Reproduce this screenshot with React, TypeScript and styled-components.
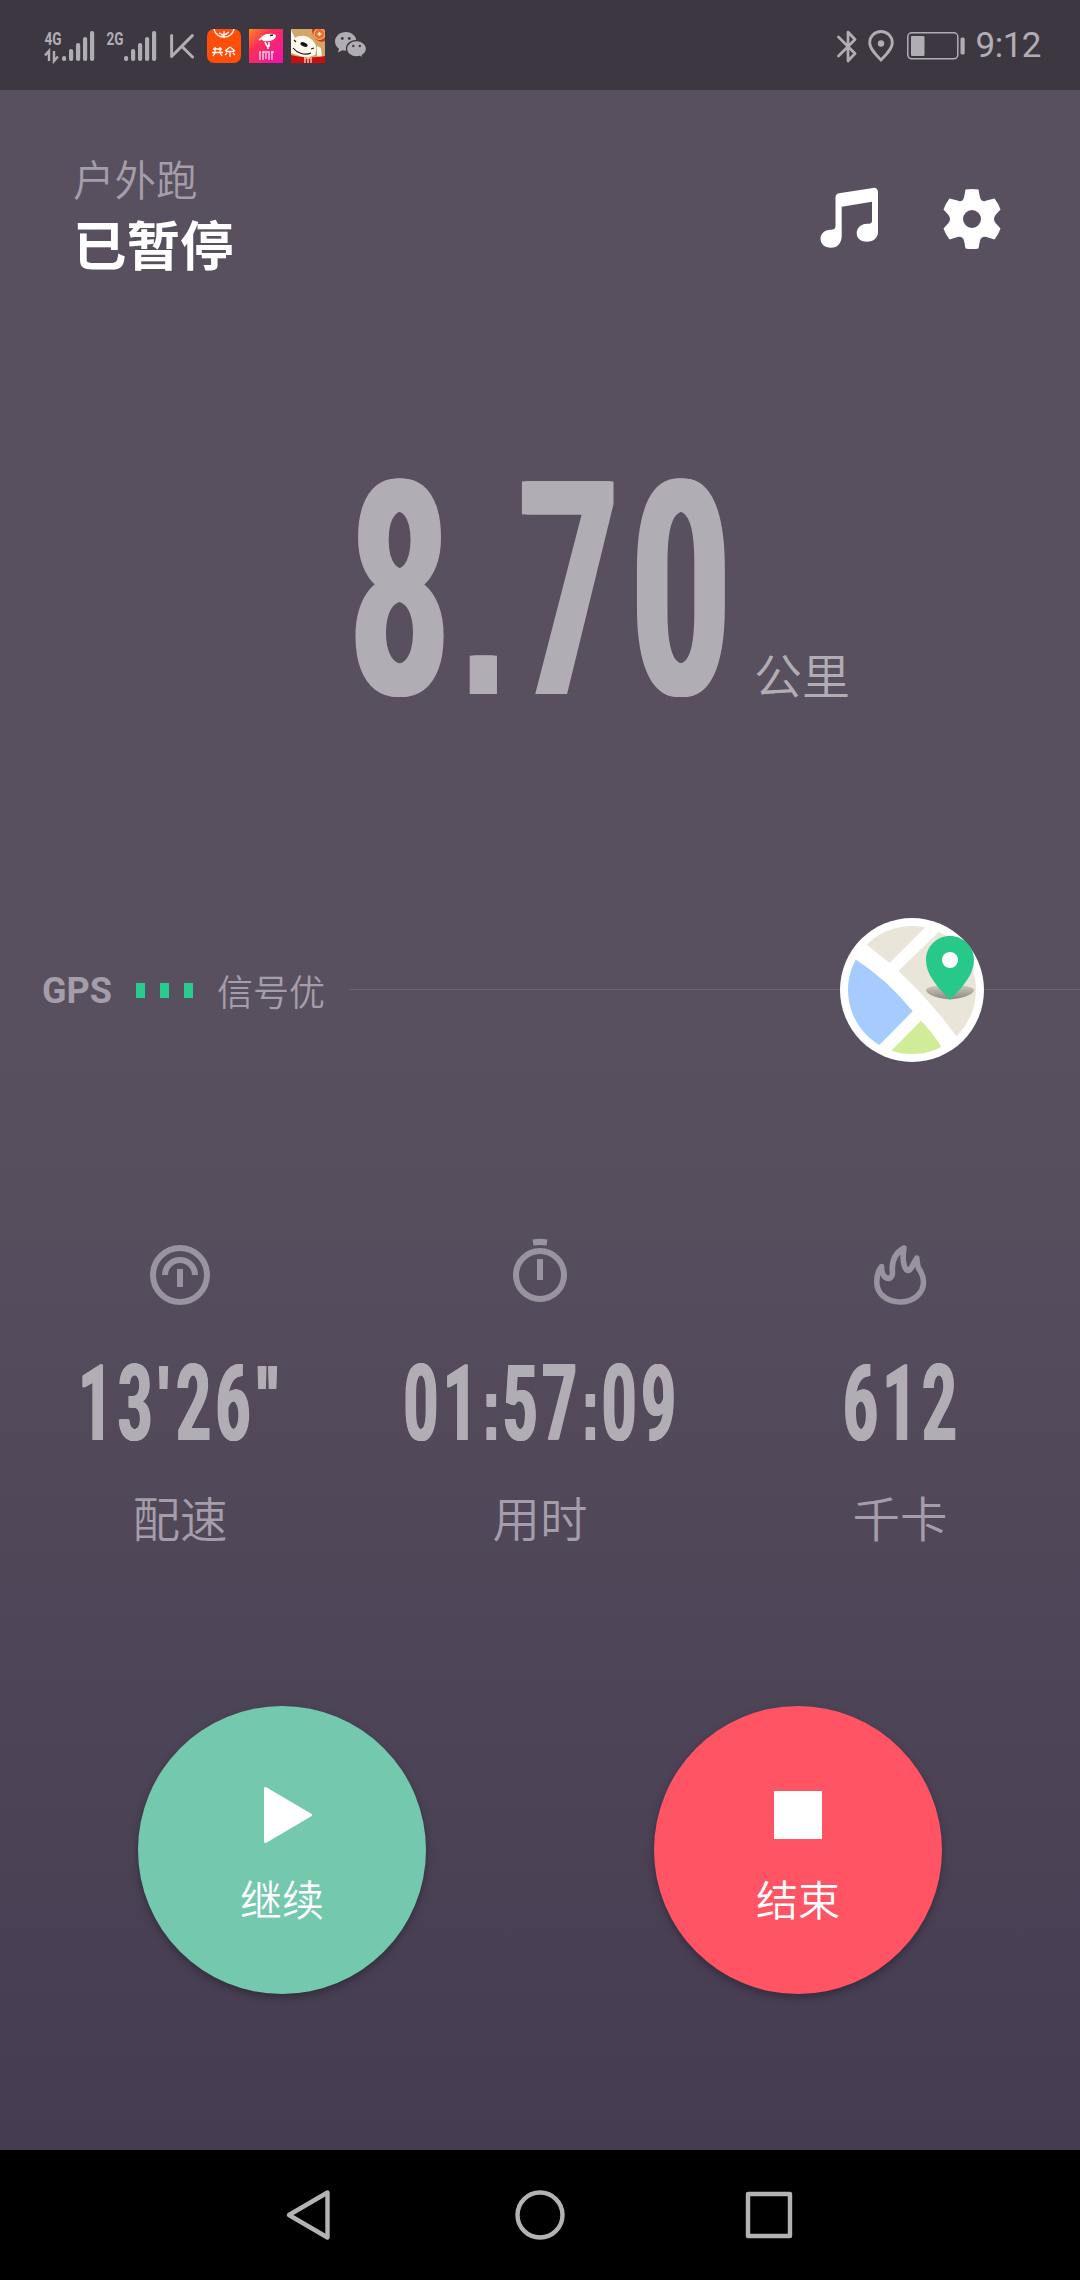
import React from 'react';
import styled, { createGlobalStyle } from 'styled-components';

const CJK = '"Noto Sans CJK SC", "Noto Sans", sans-serif';
const LATIN = 'Roboto, "Noto Sans CJK SC", sans-serif';
const SOFT = '#b1adb5';
const DIM = '#a59eaa';

const GlobalStyle = createGlobalStyle`
  html, body { margin: 0; padding: 0; background: #000; }
  * { box-sizing: border-box; }
  svg { display: block; flex: none; }
`;

const Screen = styled.div`
  width: 1080px;
  height: 2280px;
  display: flex;
  flex-direction: column;
  overflow: hidden;
  font-family: ${LATIN};
`;

const StatusBar = styled.header`
  height: 90px;
  flex: none;
  display: flex;
  align-items: center;
  justify-content: space-between;
  padding: 2px 39px 0 44px;
  background: #3d3742;
`;

const StatusGroup = styled.div<{ $gap: number }>`
  display: flex;
  align-items: center;
  gap: ${(p) => p.$gap}px;
`;

const Clock = styled.span`
  font-size: 35px;
  line-height: 40px;
  letter-spacing: -0.5px;
  color: ${SOFT};
`;

const Main = styled.main`
  height: 2060px;
  flex: none;
  display: flex;
  flex-direction: column;
  background: linear-gradient(#59505f 0%, #59505f 46%, #453c52 100%);
`;

const TitleRow = styled.section`
  height: 188px;
  padding: 60px 72px 0 73px;
  display: flex;
  justify-content: space-between;
  align-items: flex-start;
`;

const Mode = styled.div`
  font: 350 41.500px/56px ${CJK};
  color: ${DIM};
`;

const State = styled.h1`
  margin: 0;
  font: 700 53.500px/74px ${CJK};
  color: #fff;
`;

const Actions = styled.div`
  display: flex;
  gap: 51px;
  margin-top: 33px;
`;

const Distance = styled.section`
  height: 640px;
  padding-top: 204px;
  display: grid;
  grid-template-columns: 1fr 380px 1fr;
  align-items: baseline;
  align-content: start;
`;

const Digits = styled.span<{ $size: number; $line: number; $squeeze: number }>`
  white-space: nowrap;
  font-family: Roboto, sans-serif;
  font-weight: 700;
  font-size: ${(p) => p.$size}px;
  line-height: ${(p) => p.$line}px;
  letter-spacing: 0.09em;
  margin-right: -0.09em;
  transform: translateX(-0.018em) scaleX(${(p) => p.$squeeze});
  color: ${SOFT};
  text-shadow: 0.01em 0 ${SOFT}, -0.01em 0 ${SOFT}, 0.02em 0 ${SOFT}, -0.02em 0 ${SOFT};
`;

const Point = styled.span<{ $spacing: number }>`
  font-family: "Liberation Sans", sans-serif;
  font-size: 0.86em;
  line-height: 0;
  letter-spacing: ${(p) => p.$spacing}em;
`;

const Tick = styled.span`
  font-family: "Liberation Sans", sans-serif;
  font-size: 0.85em;
  line-height: 0;
  letter-spacing: 0.14em;
  vertical-align: 0.12em;
`;

const DistanceWrap = styled.div`
  grid-column: 2;
  display: flex;
  justify-content: center;
`;

const Unit = styled.span`
  padding-left: 24px;
  font: 350 48px/60px ${CJK};
  color: ${SOFT};
`;

const GpsRow = styled.section`
  height: 144px;
  display: flex;
  align-items: center;
`;

const GpsName = styled.span`
  width: 94px;
  padding: 2px 0 0 42px;
  font: 700 36px/40px Roboto, sans-serif;
  color: ${DIM};
`;

const Bars = styled.div`
  display: flex;
  gap: 15px;
  margin-left: 42px;
  margin-right: 24px;
`;

const Bar = styled.i`
  width: 9px;
  height: 15px;
  background: #2acb8f;
`;

const Signal = styled.span`
  width: 132px;
  font: 350 36px/44px ${CJK};
  color: ${DIM};
`;

const Rule = styled.div<{ $width: number }>`
  width: ${(p) => p.$width}px;
  height: 1px;
  margin-bottom: 1px;
  background: #6c6472;
`;

const Stats = styled.section`
  height: 644px;
  padding-top: 174px;
  display: grid;
  grid-template-columns: repeat(3, 360px);
`;

const Stat = styled.div`
  display: flex;
  flex-direction: column;
  align-items: center;
`;

const StatValue = styled.div`
  margin: 56px 0 43px;
  display: flex;
  justify-content: center;
`;

const StatLabel = styled.div`
  font: 350 47.500px/60px ${CJK};
  color: ${DIM};
`;

const Controls = styled.section`
  padding: 0 24px;
  display: grid;
  grid-template-columns: 1fr 1fr;
  justify-items: center;
`;

const RoundButton = styled.button<{ $color: string }>`
  width: 288px;
  height: 288px;
  border: 0;
  border-radius: 50%;
  padding: 81px 0 0;
  background: ${(p) => p.$color};
  box-shadow: 0 4px 8px rgba(0, 0, 0, 0.28);
  display: flex;
  flex-direction: column;
  align-items: center;
  color: #fff;
  font: 350 42px/56px ${CJK};
`;

const ButtonText = styled.span`
  margin-top: 27px;
`;

const NavBar = styled.nav`
  height: 130px;
  flex: none;
  background: #000;
  display: flex;
  justify-content: center;
  align-items: center;
  gap: 169px;
`;

function Cell({ label, data }: { label: string; data?: boolean }) {
  const bars = [
    [18, 26, 4],
    [25, 19, 11],
    [32, 13, 17],
    [39, 7, 23],
    [46, 1, 29],
  ];
  return (
    <svg width="51" height="48" viewBox="0 -8 51 48" fill={SOFT}>
      <text x="0.5" y="14.5" fontFamily="Roboto" fontWeight="700" fontSize="19" textLength="17" lengthAdjust="spacingAndGlyphs">{label}</text>
      {bars.map(([x, y, h]) => (
        <rect key={x} x={x} y={y} width="4.2" height={h + 1} rx="2" />
      ))}
      {data && <path d="M5 31V21L1 25.500M10 21v10l4-4.500" fill="none" stroke={SOFT} strokeWidth="2.4" />}
    </svg>
  );
}

const KeepIcon = () => (
  <svg width="24" height="25" viewBox="0 0 24 25" fill="none" stroke={SOFT} strokeWidth="3" strokeLinecap="round" strokeLinejoin="round">
    <path d="M1.600 1.600V22.500L22.300 1.600M12 12.500l10.500 10.500" />
  </svg>
);

const OrangeApp = () => (
  <svg width="34" height="34" viewBox="0 0 34 34">
    <rect width="34" height="34" rx="7" fill="#ff4e0a" />
    <g fill="none" stroke="#fff" strokeWidth="1.300">
      <path d="M7 0a10.200 10.200 0 0 0 20 0M12 4l5 2 5-3M14 7l6-2M17 2v7" />
      <path d="M8 18v6M13 18v6M6 20h9M5 23.500h11M8 24l-2 3M13 24l2 3M23 18l-5 4M23 18l5 4M19 22.500h8M23 22v6M20 24l-2 2M26 24l2 2" />
    </g>
  </svg>
);

const PinkApp = () => (
  <svg width="34" height="34" viewBox="0 0 34 34">
    <defs>
      <linearGradient id="pink" x1="0" y1="0" x2="1" y2="1">
        <stop offset="0" stopColor="#ff8a1a" />
        <stop offset=".35" stopColor="#fb2f55" />
        <stop offset="1" stopColor="#f010b0" />
      </linearGradient>
    </defs>
    <rect width="34" height="34" fill="url(#pink)" />
    <path d="M12 8c3-3 8-4 12-3l3 1c0 4-4 6-8 6-3 1-7 0-7-4z" fill="#fff" />
    <path d="M13 9l-3 2M16 13l2 4h2v-4M19 16v4" stroke="#fff" strokeWidth="1.600" fill="none" />
    <path d="M21 6.500l3-.5" stroke="#222" strokeWidth="1.600" />
    <path d="M11 22v9M10 24l2-1M14 22v9M14 23h6v8M17 24v6M23 22v9M22 23h3" stroke="#ffd9ee" strokeWidth="1.300" fill="none" />
  </svg>
);

const DogApp = () => (
  <svg width="34" height="34" viewBox="0 0 34 34">
    <rect width="34" height="34" fill="#d3a566" />
    <path d="M21 0h13v12c-6 3-13-3-13-12z" fill="#c93a1c" />
    <circle cx="28.500" cy="5" r="5.500" fill="#ec6a33" stroke="#f6b368" strokeWidth="1.200" />
    <path d="M28.500 3v4M26.500 5h4" stroke="#fff2c8" strokeWidth="1.500" />
    <path d="M0 1l4 8c5-4 14-3 19 4 3 4 3 9 1 13l-9 3L0 24z" fill="#fff8ee" />
    <path d="M26 17l4 2 1 9-5-1z" fill="#fff8ee" />
    <ellipse cx="13" cy="15.500" rx="3.800" ry="2" transform="rotate(25 13 15.500)" fill="#161010" />
    <path d="M2 19c4 5 12 8 18 5M3 11l2 2M20 20l3-1" stroke="#221512" strokeWidth="1.200" fill="none" />
    <path d="M0 26c10 3 24 3 34 1v7H0z" fill="#c8110f" />
    <path d="M13 29h8M14 29v5M17 27v7M20 29v5" stroke="#ffe5c8" strokeWidth="1.200" />
  </svg>
);

const WeChatIcon = () => (
  <svg width="34" height="28" viewBox="-2 0 34 28">
    <path d="M11 0C4.900 0 0 4.200 0 9.500c0 3 1.500 5.500 4 7.200L3 20.500l4.300-2.200c1.200.3 2.400.5 3.700.5C17 18.800 21.500 14.500 21.500 9.500S17 0 11 0z" fill={SOFT} />
    <path d="M21.500 8.500c-5.500 0-10 3.600-10 8.200s4.500 8.200 10 8.200c1.200 0 2.300-.2 3.400-.5l3.300 1.900-.9-3.100c2.600-1.500 4.200-3.900 4.200-6.500 0-4.600-4.500-8.200-10-8.200z" fill={SOFT} stroke="#3d3742" strokeWidth="1.300" />
    <g fill="#3d3742">
      <circle cx="7.300" cy="6.500" r="1.400" />
      <circle cx="14.300" cy="6.500" r="1.400" />
      <circle cx="18.300" cy="14" r="1.200" />
      <circle cx="24.800" cy="14" r="1.200" />
    </g>
  </svg>
);

const BluetoothIcon = () => (
  <svg width="20" height="33" viewBox="0 0 20 33" fill="none" stroke={SOFT} strokeWidth="2.700" strokeLinejoin="round" strokeLinecap="round">
    <path d="M1.500 7L18 23.500 11 31V2l7 7.500L1.500 26" />
  </svg>
);

const LocationIcon = () => (
  <svg width="26" height="32" viewBox="0 0 26 32">
    <path d="M13 1.500C6.700 1.500 1.700 6.300 1.700 12.500c0 6 5.300 11.500 11.300 17.500 6-6 11.300-11.500 11.300-17.500C24.300 6.300 19.300 1.500 13 1.500z" fill="none" stroke={SOFT} strokeWidth="2.800" />
    <circle cx="13" cy="13.500" r="3.200" fill={SOFT} />
  </svg>
);

const BatteryIcon = () => (
  <svg width="60" height="28" viewBox="-2 0 60 28">
    <rect x=".8" y=".8" width="50" height="26" rx="4" fill="none" stroke={SOFT} strokeWidth="1.500" />
    <rect x="4" y="4" width="13.500" height="20" rx="1" fill={SOFT} />
    <rect x="53.500" y="5.500" width="4.200" height="17" rx="1.600" fill={SOFT} />
  </svg>
);

const MusicIcon = () => (
  <svg width="72" height="72" viewBox="0 -0.7 72 72">
    <path
      fill="#fff"
      d="M26 9.500L60 4.200C63 3.700 65 5.500 65 8.200V48C65 54 60.500 58 54 58 48 58 43.700 54.500 43.700 49.500 43.700 44.300 48 40 54 40 57.500 40 59 39.500 59 37V18L28.700 23V52C28.700 59.500 24.500 64 18 64 11.500 64 7.500 60 7.500 55 7.500 50 11.500 46 17.500 46 21 46 22.500 45 22.500 42V14C22.500 11.500 23.500 10 26 9.500Z"
    />
  </svg>
);

const GearIcon = () => (
  <svg width="72" height="72" viewBox="0 0 72 72">
    <path
      fill="#fff"
      fillRule="evenodd"
      d="M29.500 6.500Q36 5.500 42.500 6.500L44 14.500C44.700 18 48 19 50.500 17.500L58.500 15.500Q62.500 20.500 64.500 26.500L59.500 32C57.500 34.500 57.500 37.500 59.500 40L64.500 45.500Q62.500 51.500 58.500 56.500L50.500 54C47.500 53 44.700 54.500 44 57.500L42.500 65.500Q36 66.500 29.500 65.500L28 57.500C27.300 54.500 24.500 53 21.500 54L13.500 56.500Q9.500 51.500 7.500 45.500L12.500 40C14.500 37.500 14.500 34.500 12.500 32L7.500 26.500Q9.500 20.500 13.500 15.500L21.500 17.500C24.500 19 27.300 18 28 14.500ZM36 27a9 9 0 1 0 0 18a9 9 0 1 0 0-18Z"
    />
  </svg>
);

const MapButton = () => (
  <svg width="144" height="144" viewBox="60 54 432 432">
    <defs>
      <clipPath id="land"><circle cx="276" cy="270" r="192" /></clipPath>
      <linearGradient id="shade" x1="0" y1="0" x2="0" y2="1">
        <stop offset="0" stopColor="#cfcabd" />
        <stop offset="1" stopColor="#8d8a82" />
      </linearGradient>
    </defs>
    <circle cx="276" cy="270" r="216" fill="#fff" />
    <g clipPath="url(#land)">
      <path d="M140 134L209 189 316 82V40H100z" fill="#e9e6d9" />
      <path d="M357 95L235 213Q330 300 409 409L520 430V60z" fill="#e9e6d9" />
      <path d="M106 178Q205 242 278 334L178 435 100 500H40V178z" fill="#a5cbff" />
      <path d="M303 362Q336 396 364 440L380 500H190L213 453z" fill="#d0ec98" />
    </g>
    <path d="M318 270C318 250 462 250 462 270 462 284 420 298 390 298S318 284 318 270z" fill="url(#shade)" />
    <path d="M390 108C350 108 318 140 318 180 318 225 352 260 390 300 428 260 462 225 462 180 462 140 430 108 390 108z" fill="#28c88b" />
    <circle cx="390" cy="180" r="24" fill="#fff" />
  </svg>
);

const PaceIcon = () => (
  <svg width="72" height="72" viewBox="0 0 72 72" fill="none" stroke="#99929f" strokeWidth="6">
    <circle cx="36" cy="39" r="27" />
    <path d="M21 39a15 15 0 0 1 30 0M36 33v18" />
  </svg>
);

const TimerIcon = () => (
  <svg width="72" height="72" viewBox="0 0 72 72" fill="none" stroke="#99929f" strokeWidth="6">
    <circle cx="36" cy="39" r="24" />
    <path d="M36 23v21" />
    <path d="M28.500 3.500Q36 2 43.500 3.500L42.500 9.500Q36 8.500 29.500 9.500Z" fill="#99929f" stroke="none" />
  </svg>
);

const FlameIcon = () => (
  <svg width="72" height="72" viewBox="0 0 72 72" fill="none" stroke="#99929f" strokeWidth="5.600" strokeLinejoin="round">
    <path d="M17.500 30.500C13.500 35 12.800 41 12.800 46.500 12.800 57 22 66 36 66S59.500 57 59.500 46C59.500 40 57.500 36.500 55 33 53.500 30.500 53.300 27 52.800 22 50 26 48 32 45.500 34 41 36.500 37.500 26 40 12 30 17.500 27.500 27 28.500 36.500 28.500 42 24.500 44 21 41 18 38.500 17.500 35 17.500 30.500Z" />
  </svg>
);

const PlayIcon = () => (
  <svg width="60" height="56" viewBox="-12 0 60 56">
    <path d="M1.500 1.500V54.500L46.500 28z" fill="#fff" stroke="#fff" strokeWidth="3" strokeLinejoin="round" />
  </svg>
);

const StopIcon = () => (
  <svg width="48" height="56" viewBox="0 0 48 56">
    <rect y="4" width="48" height="48" fill="#fff" />
  </svg>
);

const NavIcon = ({ d }: { d: string }) => (
  <svg width="60" height="60" viewBox="0 0 60 60" fill="none" stroke="#b3b3b3" strokeWidth="4.400" strokeLinejoin="round">
    <path d={d} />
  </svg>
);

function Reading({ value, size, line, squeeze }: { value: string; size: number; line: number; squeeze: number }) {
  return (
    <Digits $size={size} $line={line} $squeeze={squeeze}>
      {value.split(/([.:'"])/).map((part, i) => {
        if (part === '.' || part === ':') {
          return <Point key={i} $spacing={part === ':' ? 0.065 : 0.115}>{part}</Point>;
        }
        if (part === "'" || part === '"') return <Tick key={i}>{part}</Tick>;
        return part;
      })}
    </Digits>
  );
}

const stats = [
  { icon: <PaceIcon />, value: `13'26"`, label: '配速' },
  { icon: <TimerIcon />, value: '01:57:09', label: '用时' },
  { icon: <FlameIcon />, value: '612', label: '千卡' },
];

export default function App() {
  return (
    <>
      <GlobalStyle />
      <Screen>
        <StatusBar>
          <StatusGroup $gap={13}>
            <StatusGroup $gap={11}>
              <Cell label="4G" data />
              <Cell label="2G" />
            </StatusGroup>
            <KeepIcon />
            <StatusGroup $gap={8}>
              <OrangeApp />
              <PinkApp />
              <DogApp />
              <WeChatIcon />
            </StatusGroup>
          </StatusGroup>
          <StatusGroup $gap={11}>
            <BluetoothIcon />
            <LocationIcon />
            <BatteryIcon />
            <Clock>9:12</Clock>
          </StatusGroup>
        </StatusBar>
        <Main>
          <TitleRow>
            <div>
              <Mode>户外跑</Mode>
              <State>已暂停</State>
            </div>
            <Actions>
              <MusicIcon />
              <GearIcon />
            </Actions>
          </TitleRow>
          <Distance>
            <DistanceWrap>
              <Reading value="8.70" size={299} line={220} squeeze={0.565} />
            </DistanceWrap>
            <Unit>公里</Unit>
          </Distance>
          <GpsRow>
            <GpsName>GPS</GpsName>
            <Bars>
              <Bar />
              <Bar />
              <Bar />
            </Bars>
            <Signal>信号优</Signal>
            <Rule $width={491} />
            <MapButton />
            <Rule $width={96} />
          </GpsRow>
          <Stats>
            {stats.map((s) => (
              <Stat key={s.label}>
                {s.icon}
                <StatValue>
                  <Reading value={s.value} size={106} line={80} squeeze={0.56} />
                </StatValue>
                <StatLabel>{s.label}</StatLabel>
              </Stat>
            ))}
          </Stats>
          <Controls>
            <RoundButton $color="#73c8ae">
              <PlayIcon />
              <ButtonText>继续</ButtonText>
            </RoundButton>
            <RoundButton $color="#ff5464">
              <StopIcon />
              <ButtonText>结束</ButtonText>
            </RoundButton>
          </Controls>
        </Main>
        <NavBar>
          <NavIcon d="M46.500 7.500V52.500L8 30z" />
          <NavIcon d="M30 7.500a22.500 22.500 0 1 0 0 45a22.500 22.500 0 1 0 0-45z" />
          <NavIcon d="M9 9H51V51H9z" />
        </NavBar>
      </Screen>
    </>
  );
}
